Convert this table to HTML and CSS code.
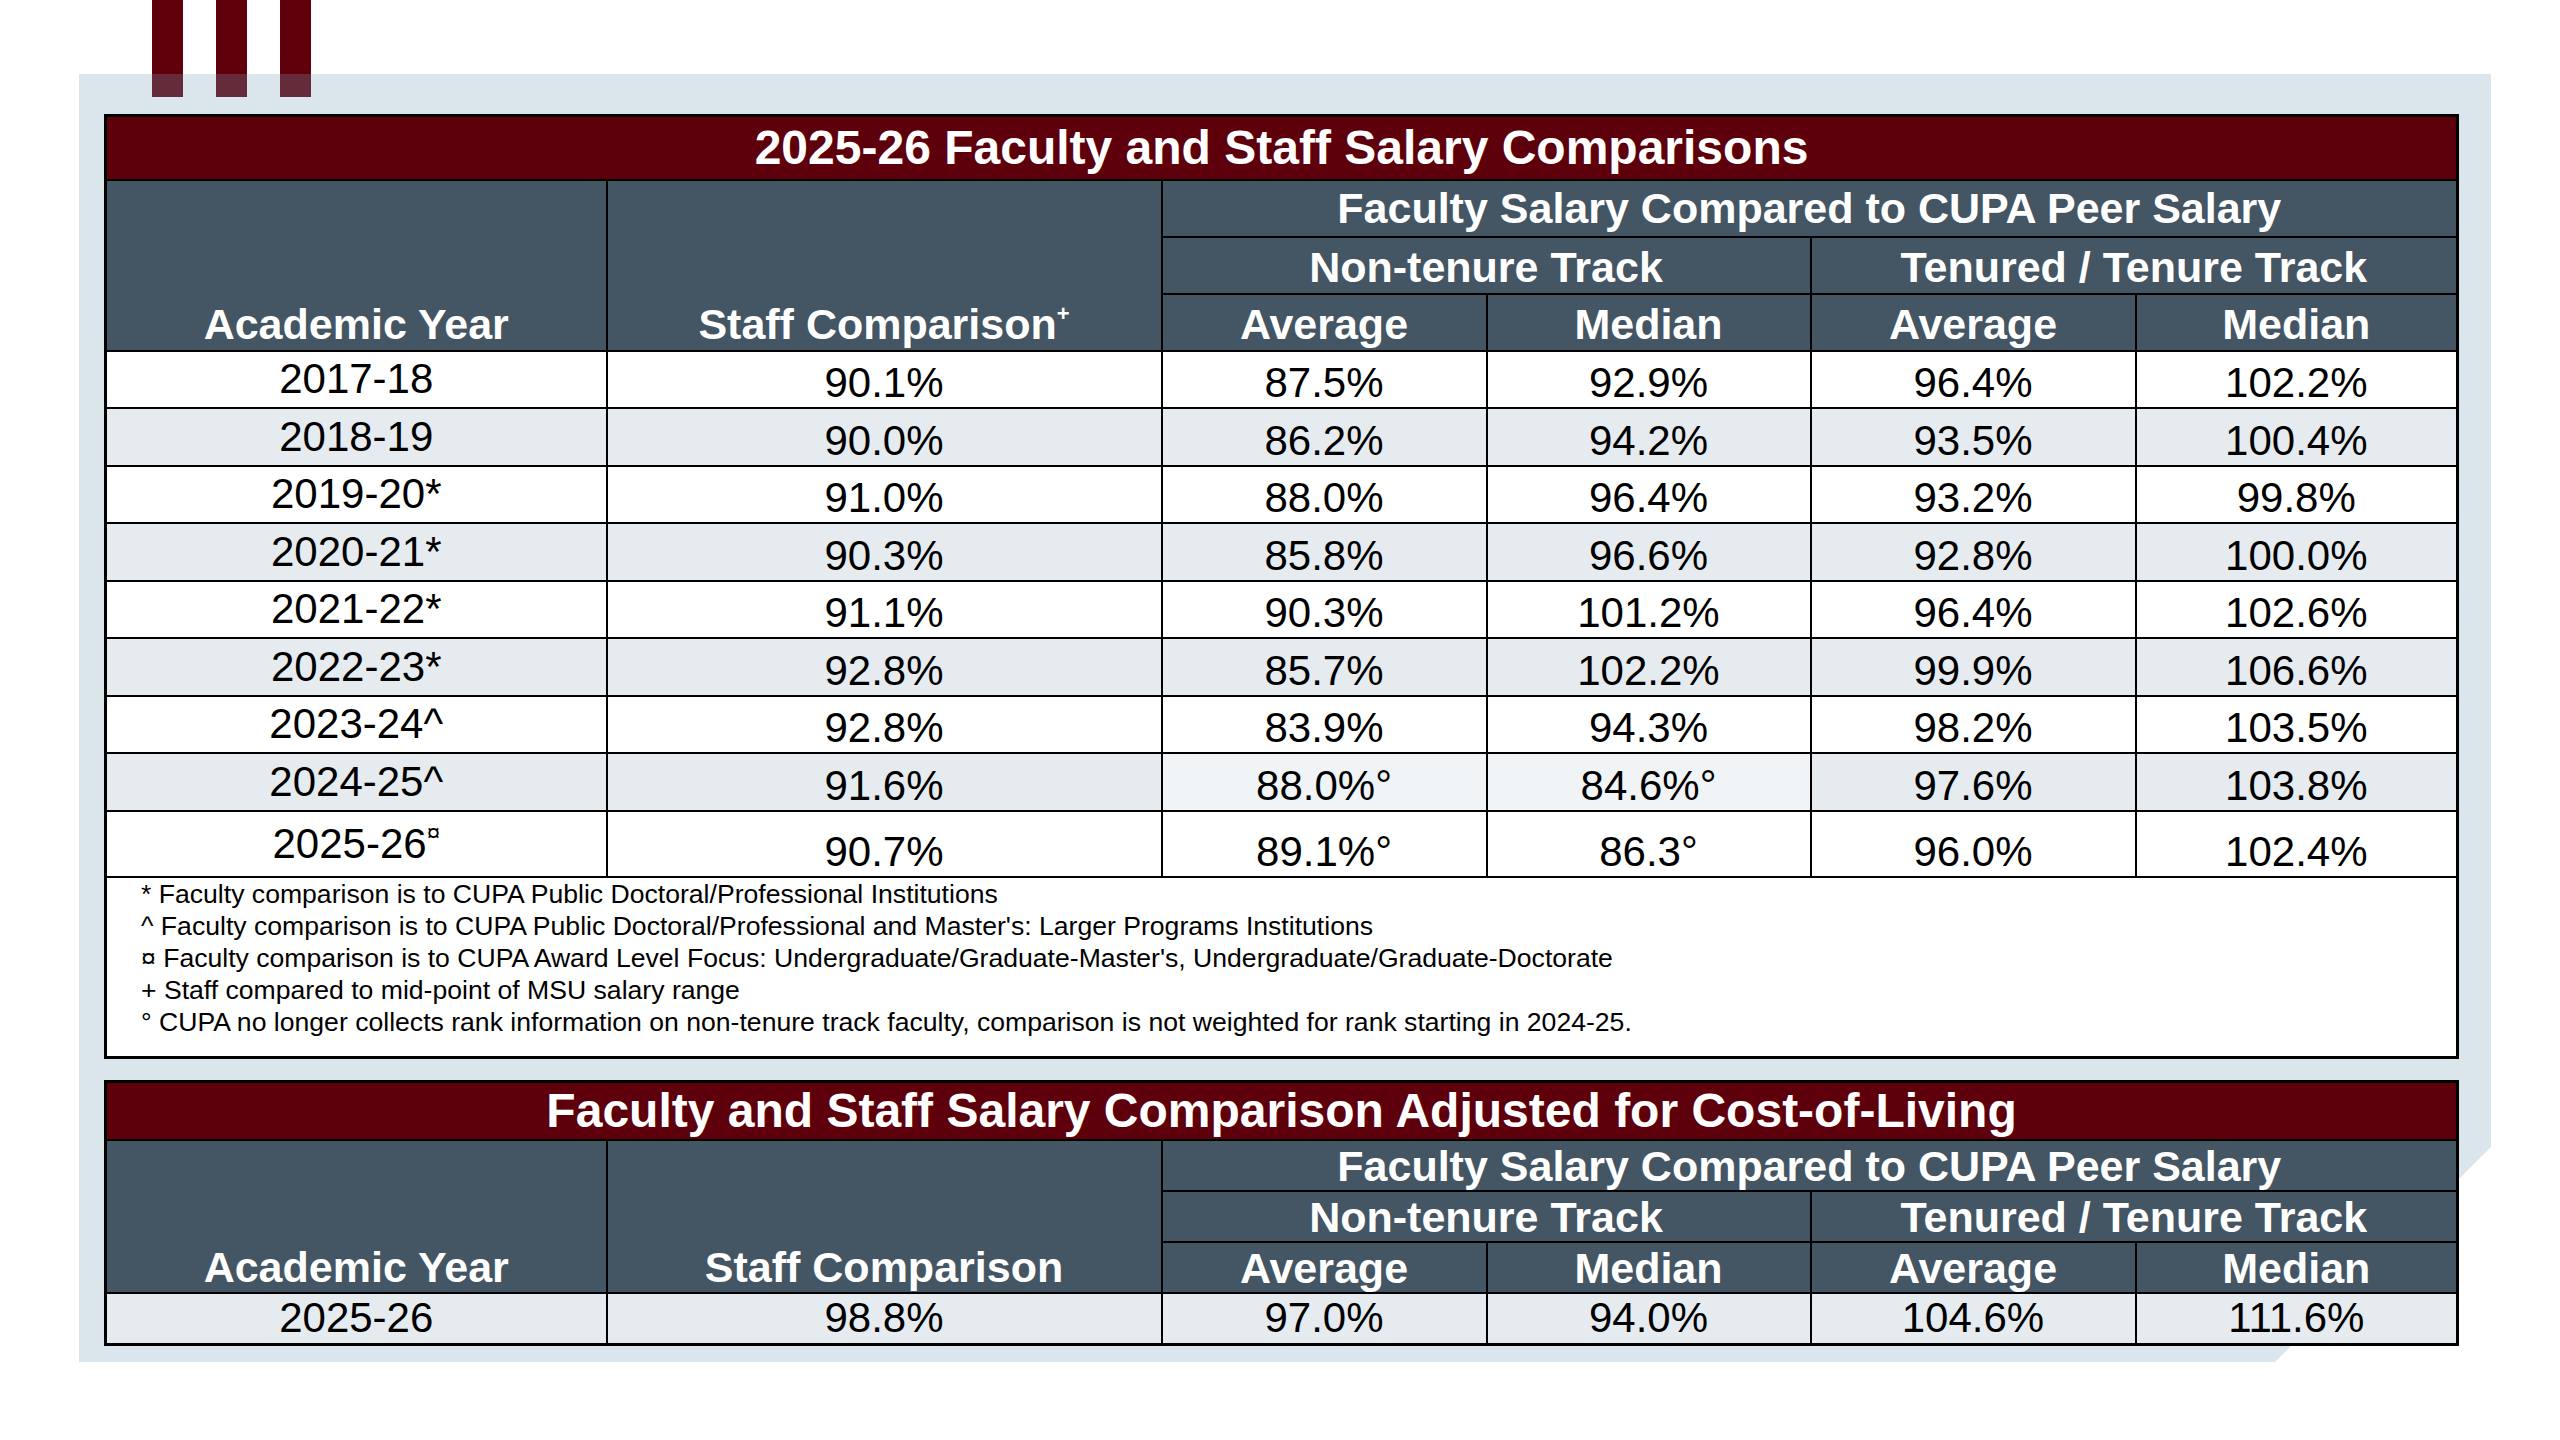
FILE: index.html
```html
<!DOCTYPE html>
<html lang="en">
<head>
    <meta charset="UTF-8">
    <title>Faculty and Staff Salary Comparisons</title>
    <link rel="stylesheet" href="styles.css">
</head>
<body>
    <div class="page">
        <div class="stripes"><span></span><span></span><span></span></div>
        <div class="panel">
            <table class="salary main">
                <colgroup>
                    <col class="c-year"><col class="c-staff"><col class="c-a"><col class="c-b"><col class="c-c"><col class="c-d">
                </colgroup>
                <tr class="title"><th colspan="6">2025-26 Faculty and Staff Salary Comparisons</th></tr>
                <tr class="group top"><th rowspan="3">Academic Year</th><th rowspan="3">Staff Comparison<sup>+</sup></th><th colspan="4">Faculty Salary Compared to CUPA Peer Salary</th></tr>
                <tr class="group"><th colspan="2">Non-tenure Track</th><th colspan="2">Tenured / Tenure Track</th></tr>
                <tr class="group"><th>Average</th><th>Median</th><th>Average</th><th>Median</th></tr>
                <tr class="row"><td class="year">2017-18</td><td>90.1%</td><td>87.5%</td><td>92.9%</td><td>96.4%</td><td>102.2%</td></tr>
                <tr class="row alt"><td class="year">2018-19</td><td>90.0%</td><td>86.2%</td><td>94.2%</td><td>93.5%</td><td>100.4%</td></tr>
                <tr class="row"><td class="year">2019-20*</td><td>91.0%</td><td>88.0%</td><td>96.4%</td><td>93.2%</td><td>99.8%</td></tr>
                <tr class="row alt"><td class="year">2020-21*</td><td>90.3%</td><td>85.8%</td><td>96.6%</td><td>92.8%</td><td>100.0%</td></tr>
                <tr class="row"><td class="year">2021-22*</td><td>91.1%</td><td>90.3%</td><td>101.2%</td><td>96.4%</td><td>102.6%</td></tr>
                <tr class="row alt"><td class="year">2022-23*</td><td>92.8%</td><td>85.7%</td><td>102.2%</td><td>99.9%</td><td>106.6%</td></tr>
                <tr class="row"><td class="year">2023-24^</td><td>92.8%</td><td>83.9%</td><td>94.3%</td><td>98.2%</td><td>103.5%</td></tr>
                <tr class="row alt"><td class="year">2024-25^</td><td>91.6%</td><td class="soft">88.0%°</td><td class="soft">84.6%°</td><td>97.6%</td><td>103.8%</td></tr>
                <tr class="row tall"><td class="year">2025-26<sup>¤</sup></td><td>90.7%</td><td>89.1%°</td><td>86.3°</td><td>96.0%</td><td>102.4%</td></tr>
                <tr class="notes">
                    <td colspan="6">
                        <p>* Faculty comparison is to CUPA Public Doctoral/Professional Institutions</p>
                        <p>^ Faculty comparison is to CUPA Public Doctoral/Professional and Master's: Larger Programs Institutions</p>
                        <p>¤ Faculty comparison is to CUPA Award Level Focus: Undergraduate/Graduate-Master's, Undergraduate/Graduate-Doctorate</p>
                        <p>+ Staff compared to mid-point of MSU salary range</p>
                        <p>° CUPA no longer collects rank information on non-tenure track faculty, comparison is not weighted for rank starting in 2024-25.</p>
                    </td>
                </tr>
            </table>

            <table class="salary col">
                <colgroup>
                    <col class="c-year"><col class="c-staff"><col class="c-a"><col class="c-b"><col class="c-c"><col class="c-d">
                </colgroup>
                <tr class="title"><th colspan="6">Faculty and Staff Salary Comparison Adjusted for Cost-of-Living</th></tr>
                <tr class="group top"><th rowspan="3">Academic Year</th><th rowspan="3">Staff Comparison</th><th colspan="4">Faculty Salary Compared to CUPA Peer Salary</th></tr>
                <tr class="group"><th colspan="2">Non-tenure Track</th><th colspan="2">Tenured / Tenure Track</th></tr>
                <tr class="group"><th>Average</th><th>Median</th><th>Average</th><th>Median</th></tr>
                <tr class="row alt"><td class="year">2025-26</td><td>98.8%</td><td>97.0%</td><td>94.0%</td><td>104.6%</td><td>111.6%</td></tr>
            </table>
        </div>
    </div>
</body>
</html>
```

FILE: styles.css
```css
body {
    margin: 0;
    background: #fff;
    font-family: "Liberation Sans", Arial, sans-serif;
    color: #000;
}
.page {
    width: 2560px;
    height: 1440px;
    overflow: hidden;
}
.stripes {
    display: flex;
    gap: 33px;
    padding-left: 152px;
    height: 97px;
}
.stripes span {
    width: 31px;
    background: #5f000b;
}
.panel {
    position: relative;
    isolation: isolate;
    box-sizing: border-box;
    width: 2412px;
    height: 1288px;
    margin: -23px 0 0 79px;
    padding: 40px 0 0 25px;
}
/* light backdrop with the cut corner, sits behind the tables */
.panel::before {
    content: "";
    position: absolute;
    inset: 0;
    z-index: -1;
    background: rgba(118, 160, 185, 0.27);
    clip-path: polygon(0 0, 100% 0, 100% calc(100% - 215px), calc(100% - 216px) 100%, 0 100%);
}
.salary {
    border-collapse: collapse;
    table-layout: fixed;
    width: 2352px;
    border: 3px solid #000;
}
.salary .c-year { width: 501px; }
.salary .c-staff { width: 555px; }
.salary .c-a { width: 325px; }
.salary .c-b { width: 324px; }
.salary .c-c { width: 325px; }
.salary .c-d { width: 322px; }
.salary th,
.salary td {
    border: 2px solid #000;
    padding: 0;
    text-align: center;
}
.title th {
    background: #5e000b;
    color: #fff;
    font-size: 48px;
    font-weight: bold;
    line-height: 52px;
    vertical-align: middle;
}
.group th {
    background: #445563;
    color: #fff;
    font-size: 43px;
    line-height: 48px;
    vertical-align: bottom;
    padding-bottom: 2px;
}
.group.top th[colspan] {
    vertical-align: middle;
    padding-bottom: 0;
}
.group sup {
    font-size: 22px;
    vertical-align: 18px;
    line-height: 0;
}
.row td {
    font-size: 42px;
    line-height: 46px;
    vertical-align: middle;
    padding-top: 8px;
    background: #fff;
}
.row td.year {
    padding-top: 0;
}
.row.alt td {
    background: #e6ebf0;
}
.row.alt td.soft {
    background: #f1f4f7;
}
.row.tall td {
    padding-top: 16px;
}
.row.tall td.year {
    padding-top: 0;
}
.row.tall sup {
    font-size: 24px;
    vertical-align: 17px;
    line-height: 0;
}
.notes td {
    text-align: left;
    vertical-align: top;
    background: #fff;
    font-size: 26.6px;
    line-height: 32.2px;
    padding: 0 0 17px 34px;
}
.notes p {
    margin: 0;
}
.main .title { height: 64px; }
.main .group { height: 57px; }
.main .row { height: 57.5px; }
.main .row.tall { height: 66px; }
.col {
    margin-top: 21px;
}
.col .title { height: 59px; }
.col .group { height: 51px; }
.col .group th {
    vertical-align: middle;
    padding-bottom: 0;
}
.col .group th[rowspan] {
    vertical-align: bottom;
    padding-bottom: 1px;
}
.col .row { height: 51px; }
.col .row td {
    padding-top: 0;
}
```
